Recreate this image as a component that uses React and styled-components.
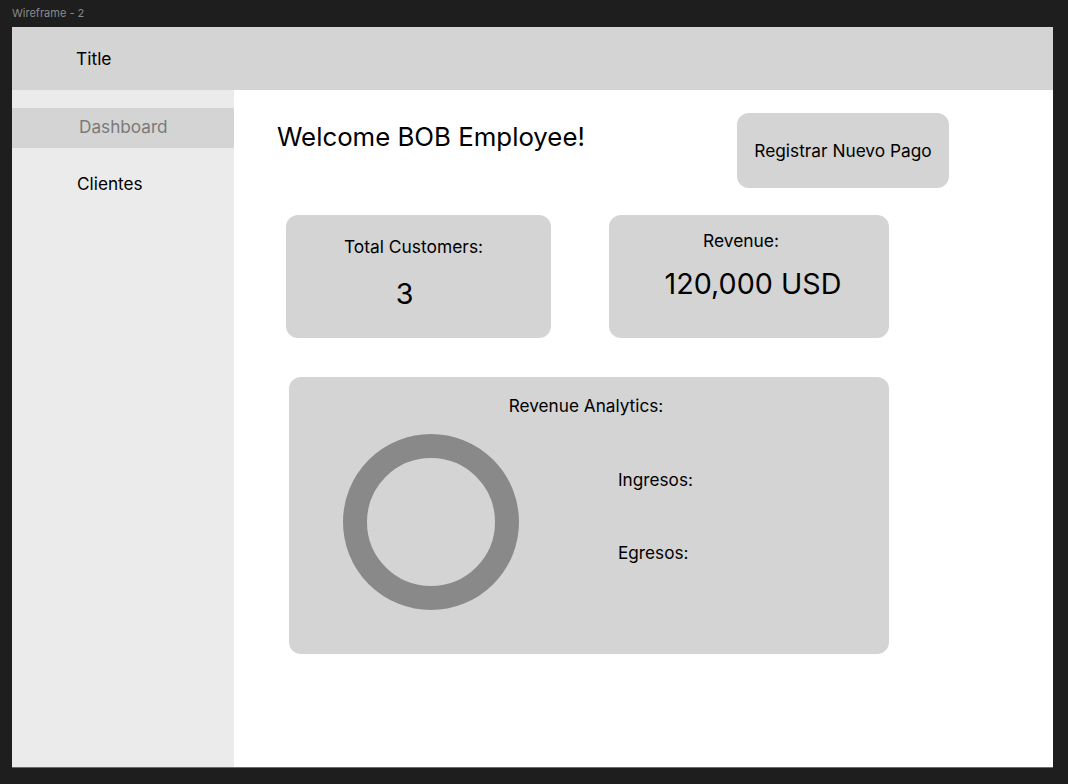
import styled, { createGlobalStyle } from 'styled-components';

const GlobalStyle = createGlobalStyle`
  html, body {
    margin: 0;
    padding: 0;
    background: #1e1e1e;
  }
  body {
    font-family: Inter, "Noto Sans", "Liberation Sans", sans-serif;
    color: #000;
  }
  * {
    box-sizing: border-box;
  }
`;

const navItems = [
  { label: 'Dashboard', active: true },
  { label: 'Clientes' },
];

const Donut = () => (
  <svg width="176" height="176" viewBox="0 0 176 176">
    <circle cx="88" cy="88" r="76" fill="none" stroke="#898989" strokeWidth="24" />
  </svg>
);

const App = () => {
  return (
    <>
      <GlobalStyle />
      <Canvas>
        <FrameLabel>Wireframe - 2</FrameLabel>
        <Frame>
          <Header>
            <HeaderTitle>Title</HeaderTitle>
          </Header>

          <Sidebar>
            {navItems.map((item) => (
              <NavItem key={item.label} $active={item.active}>
                {item.label}
              </NavItem>
            ))}
          </Sidebar>

          <Main>
            <TopRow>
              <Welcome>Welcome BOB Employee!</Welcome>
              <PrimaryButton>Registrar Nuevo Pago</PrimaryButton>
            </TopRow>

            <StatsRow>
              <StatCard $width={265} $padTop={21} $gap={19}>
                <StatLabel $shift={-5}>Total Customers:</StatLabel>
                <StatValue $shift={-14}>3</StatValue>
              </StatCard>
              <StatCard $width={280} $padTop={15} $gap={15}>
                <StatLabel $shift={-8}>Revenue:</StatLabel>
                <StatValue $shift={4}>120,000 USD</StatValue>
              </StatCard>
            </StatsRow>

            <AnalyticsCard>
              <AnalyticsTitle>Revenue Analytics:</AnalyticsTitle>
              <AnalyticsBody>
                <Donut />
                <Legend>
                  <LegendItem>Ingresos:</LegendItem>
                  <LegendItem>Egresos:</LegendItem>
                </Legend>
              </AnalyticsBody>
            </AnalyticsCard>
          </Main>
        </Frame>
      </Canvas>
    </>
  );
};

const Canvas = styled.div`
  width: 1068px;
  height: 784px;
  padding: 0 15px 0 12px;
  background: #1e1e1e;
`;

const FrameLabel = styled.div`
  height: 27px;
  padding-top: 6px;
  font-size: 11px;
  line-height: 14px;
  color: #8a8a8a;
`;

const Frame = styled.div`
  width: 1041px;
  height: 741px;
  display: grid;
  grid-template-columns: 222px 1fr;
  grid-template-rows: 63px 1fr;
  background: #ffffff;
  border-bottom: 1px solid #6a6a6a;
  overflow: hidden;
`;

const Header = styled.header`
  grid-column: 1 / -1;
  display: flex;
  align-items: center;
  padding-left: 64px;
  background: #d4d4d4;
`;

const HeaderTitle = styled.h1`
  margin: 0;
  font-size: 17.4px;
  font-weight: 400;
  line-height: 22px;
`;

const Sidebar = styled.nav`
  display: flex;
  flex-direction: column;
  gap: 16px;
  padding-top: 18px;
  background: #ebebeb;
`;

const NavItem = styled.div`
  height: 40px;
  display: flex;
  align-items: center;
  padding-left: ${(p) => (p.$active ? '67px' : '65px')};
  padding-bottom: ${(p) => (p.$active ? '4px' : '2px')};
  font-size: 17.2px;
  color: ${(p) => (p.$active ? '#7a7a7a' : '#000')};
  background: ${(p) => (p.$active ? '#d4d4d4' : 'transparent')};
`;

const Main = styled.main`
  display: flex;
  flex-direction: column;
  align-items: flex-start;
  padding: 23px 0 0 43px;
`;

const TopRow = styled.div`
  display: grid;
  grid-template-columns: 460px 212px;
  align-items: start;
`;

const Welcome = styled.h2`
  margin: 8px 0 0;
  font-size: 25.8px;
  font-weight: 400;
  line-height: 32px;
`;

const PrimaryButton = styled.button`
  height: 75px;
  border: none;
  border-radius: 12px;
  background: #d4d4d4;
  font-family: inherit;
  font-size: 17.3px;
  color: #000;
  cursor: pointer;
`;

const StatsRow = styled.div`
  display: flex;
  gap: 58px;
  margin: 27px 0 0 9px;
`;

const StatCard = styled.div`
  width: ${(p) => p.$width}px;
  height: 123px;
  display: flex;
  flex-direction: column;
  align-items: center;
  gap: ${(p) => p.$gap}px;
  padding-top: ${(p) => p.$padTop}px;
  border-radius: 12px;
  background: #d4d4d4;
`;

const StatLabel = styled.div`
  font-size: 17.4px;
  line-height: 22px;
  transform: translateX(${(p) => p.$shift || 0}px);
`;

const StatValue = styled.div`
  font-size: 28.7px;
  line-height: 34px;
  transform: translateX(${(p) => p.$shift || 0}px);
`;

const AnalyticsCard = styled.section`
  width: 600px;
  height: 277px;
  margin: 39px 0 0 12px;
  padding-top: 18px;
  border-radius: 12px;
  background: #d4d4d4;
`;

const AnalyticsTitle = styled.div`
  text-align: center;
  padding-right: 6px;
  font-size: 17.2px;
  line-height: 22px;
`;

const AnalyticsBody = styled.div`
  display: flex;
  align-items: flex-start;
  margin-top: 17px;
  padding-left: 54px;
`;

const Legend = styled.div`
  display: flex;
  flex-direction: column;
  gap: 51px;
  margin-left: 99px;
  padding-top: 35px;
`;

const LegendItem = styled.div`
  font-size: 17.2px;
  line-height: 22px;
`;

export default App;
